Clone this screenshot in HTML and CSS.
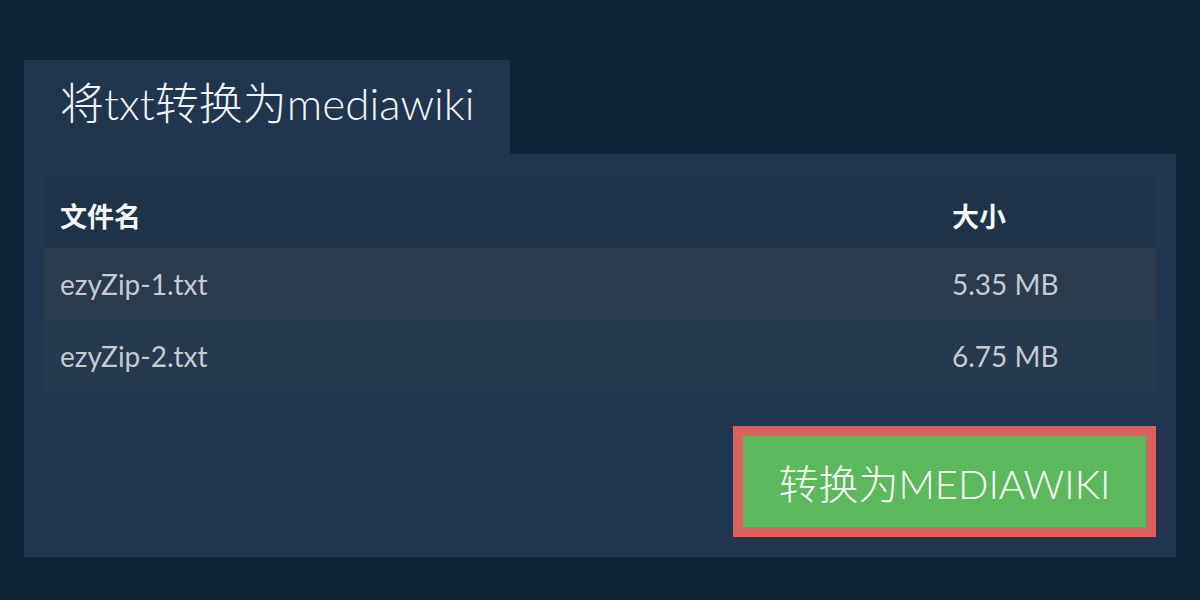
FILE: index.html
```html
<!DOCTYPE html>
<html lang="zh">
<head>
<meta charset="utf-8">
<link rel="stylesheet" href="styles.css">
</head>
<body>
<div class="wrap">
  <div class="tab">将txt转换为mediawiki</div>
  <div class="panel">
    <table class="files">
      <thead>
        <tr><th class="c-name">文件名</th><th class="c-size">大小</th></tr>
      </thead>
      <tbody>
        <tr class="odd"><td>ezyZip-1.txt</td><td>5.35 MB</td></tr>
        <tr class="even"><td>ezyZip-2.txt</td><td>6.75 MB</td></tr>
      </tbody>
    </table>
    <div class="actions">
      <button class="convert">转换为MEDIAWIKI</button>
    </div>
  </div>
</div>
</body>
</html>
```
FILE: styles.css
```css
html, body {
  margin: 0;
  padding: 0;
  background: #0f2339;
  font-family: Lato, "Noto Sans CJK SC", sans-serif;
}
.wrap {
  padding: 60px 24px 0 24px;
}
.tab {
  display: inline-block;
  background: #20364f;
  color: #f2f4f6;
  font-size: 44px;
  font-weight: 300;
  height: 94px;
  line-height: 86px;
  padding: 0 36px;
  box-sizing: border-box;
  width: 486px;
  vertical-align: top;
  white-space: nowrap;
}
.panel {
  background: #20364f;
  padding: 22px 20px 20px 20px;
  height: 403px;
  box-sizing: border-box;
}
.files {
  width: 100%;
  border-collapse: collapse;
  table-layout: fixed;
  font-size: 28px;
}
.files th {
  background: #1e334a;
  color: #f5f6f8;
  font-weight: 700;
  font-size: 27px;
  text-align: left;
  height: 72px;
  padding: 6px 16px 0 16px;
  box-sizing: border-box;
}
.files td {
  color: #c5cbd3;
  height: 72px;
  padding: 0 16px;
}
.files th.c-size { width: 220px; }
.odd td { background: #2b3b4e; }
.even td { background: #25394f; }
.actions {
  display: flex;
  justify-content: flex-end;
  padding-top: 34px;
}
.convert {
  background: #5cb85c;
  border: 10px solid #dc605c;
  color: #ffffff;
  font-family: Lato, "Noto Sans CJK SC", sans-serif;
  font-size: 40px;
  font-weight: 300;
  width: 423px;
  height: 111px;
  padding: 0;
  cursor: pointer;
  white-space: nowrap;
}
```
